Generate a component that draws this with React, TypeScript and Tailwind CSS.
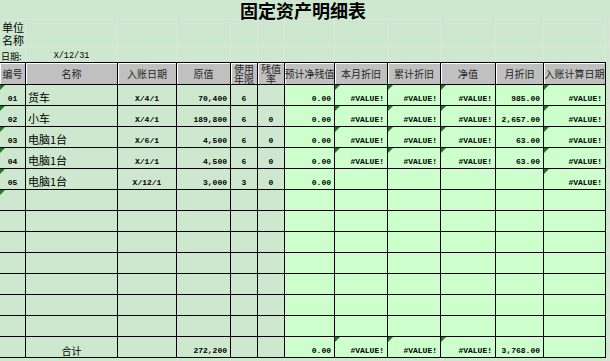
import React from "react";

const GRID =
  "grid grid-cols-[26px_92px_59px_54px_27px_27px_50px_53px_53px_55px_48px_62px_1fr]";
const CJK = "font-['Noto_Sans_CJK_SC',sans-serif]";
const MONO = "font-['Liberation_Mono',monospace]";
const PAGE_BG = "bg-[#cde8cf]";
const BRIGHT_BG = "bg-[#ccffcc]";
const FAINT = "border-[#dce6dc]";

type Row = {
  v: string[];
  tri: number[];
  total?: boolean;
};

const rows: Row[] = [
  {
    v: ["01", "货车", "X/4/1", "70,400", "6", "", "0.00", "#VALUE!", "#VALUE!", "#VALUE!", "985.00", "#VALUE!"],
    tri: [0, 7, 8, 9, 11],
  },
  {
    v: ["02", "小车", "X/4/1", "189,800", "6", "0", "0.00", "#VALUE!", "#VALUE!", "#VALUE!", "2,657.00", "#VALUE!"],
    tri: [0, 7, 8, 9, 11],
  },
  {
    v: ["03", "电脑1台", "X/6/1", "4,500", "6", "0", "0.00", "#VALUE!", "#VALUE!", "#VALUE!", "63.00", "#VALUE!"],
    tri: [0, 7, 8, 9, 11],
  },
  {
    v: ["04", "电脑1台", "X/1/1", "4,500", "6", "0", "0.00", "#VALUE!", "#VALUE!", "#VALUE!", "63.00", "#VALUE!"],
    tri: [0, 7, 8, 9, 11],
  },
  {
    v: ["05", "电脑1台", "X/12/1", "3,000", "3", "0", "0.00", "", "", "", "", "#VALUE!"],
    tri: [0, 11],
  },
  { v: Array(12).fill(""), tri: [0] },
  { v: Array(12).fill(""), tri: [] },
  { v: Array(12).fill(""), tri: [] },
  { v: Array(12).fill(""), tri: [] },
  { v: Array(12).fill(""), tri: [] },
  { v: Array(12).fill(""), tri: [] },
  { v: Array(12).fill(""), tri: [] },
  {
    v: ["", "合计", "", "272,200", "", "", "0.00", "#VALUE!", "#VALUE!", "#VALUE!", "3,768.00", ""],
    tri: [7, 8, 9],
    total: true,
  },
];

const headers = [
  "编号",
  "名称",
  "入账日期",
  "原值",
  "使用年限",
  "残值率",
  "预计净残值",
  "本月折旧",
  "累计折旧",
  "净值",
  "月折旧",
  "入账计算日期",
];

function align(i: number, total?: boolean) {
  if (i === 0 || i === 2 || i === 4 || i === 5) return "justify-center";
  if (i === 1) return total ? "justify-center" : "justify-start pl-[2px]";
  return "justify-end pr-[3px]";
}

function Tri() {
  return (
    <span className="absolute left-0 top-0 h-0 w-0 border-t-[5px] border-r-[5px] border-t-[#1d7a1d] border-r-transparent" />
  );
}

export default function App() {
  return (
    <div className={`w-[610px] h-[361px] overflow-hidden ${PAGE_BG} text-black ${CJK}`}>
      {/* title */}
      <div className={`h-[20px] border-b ${FAINT} flex items-start`}>
        <div className="w-[606px] text-center text-[18px] font-bold leading-[19px] pt-[1px]">
          固定资产明细表
        </div>
      </div>
      {/* 单位名称 row */}
      <div className={`${GRID} h-[28px]`}>
        {Array.from({ length: 13 }).map((_, i) => (
          <div key={i} className={`border-r border-b ${FAINT} relative`}>
            {i === 0 && (
              <div className="absolute left-[2px] top-[1px] flex flex-col text-[11px] leading-[13px] whitespace-nowrap">
                <span className="h-[13px]">单位</span>
                <span className="h-[13px]">名称</span>
              </div>
            )}
          </div>
        ))}
      </div>
      {/* 日期 row */}
      <div className={`${GRID} h-[14px]`}>
        {Array.from({ length: 13 }).map((_, i) => (
          <div key={i} className={`border-r ${FAINT} relative flex items-end`}>
            {i === 0 && (
              <span className="pl-[1px] text-[9px] leading-[11px] whitespace-nowrap">日期:</span>
            )}
            {i === 1 && (
              <span className={`w-full text-center ${MONO} text-[8.5px] leading-[11px]`}>X/12/31</span>
            )}
          </div>
        ))}
      </div>
      {/* header */}
      <div className={`${GRID} h-[23px]`}>
        {headers.map((h, i) => (
          <div
            key={i}
            className="bg-[#c0c0c0] border-t border-b border-r border-black shadow-[inset_1px_1px_0_#ffffff] flex items-center justify-center text-center text-[10px] leading-[10px] text-[#262626] overflow-hidden"
          >
            <span className={i === 4 || i === 5 ? "w-[22px] leading-[10px]" : "whitespace-nowrap"}>{h}</span>
          </div>
        ))}
        <div className={`border-r border-b ${FAINT}`} />
      </div>
      {/* body */}
      {rows.map((r, ri) => (
        <div key={ri} className={`${GRID} h-[21px]`}>
          {r.v.map((val, i) => {
            const isCjk = i === 1 && !r.total;
            const bg = i >= 6 ? BRIGHT_BG : PAGE_BG;
            return (
              <div
                key={i}
                className={`relative ${bg} border-r border-b border-black flex items-end overflow-hidden whitespace-nowrap ${align(
                  i,
                  r.total
                )} pb-[1px]`}
              >
                {r.tri.includes(i) && <Tri />}
                {val &&
                  (isCjk ? (
                    <span className="text-[11px] leading-[14px]">{val}</span>
                  ) : r.total && i === 1 ? (
                    <span className="text-[10px] leading-[10px]">{val}</span>
                  ) : (
                    <span className={`${MONO} font-bold text-[8px] leading-[10px]`}>{val}</span>
                  ))}
              </div>
            );
          })}
          <div className={`border-r border-b ${FAINT}`} />
        </div>
      ))}
      <div className={`${GRID} h-[4px]`}>
        {Array.from({ length: 13 }).map((_, i) => (
          <div key={i} className={`border-r ${FAINT}`} />
        ))}
      </div>
    </div>
  );
}
